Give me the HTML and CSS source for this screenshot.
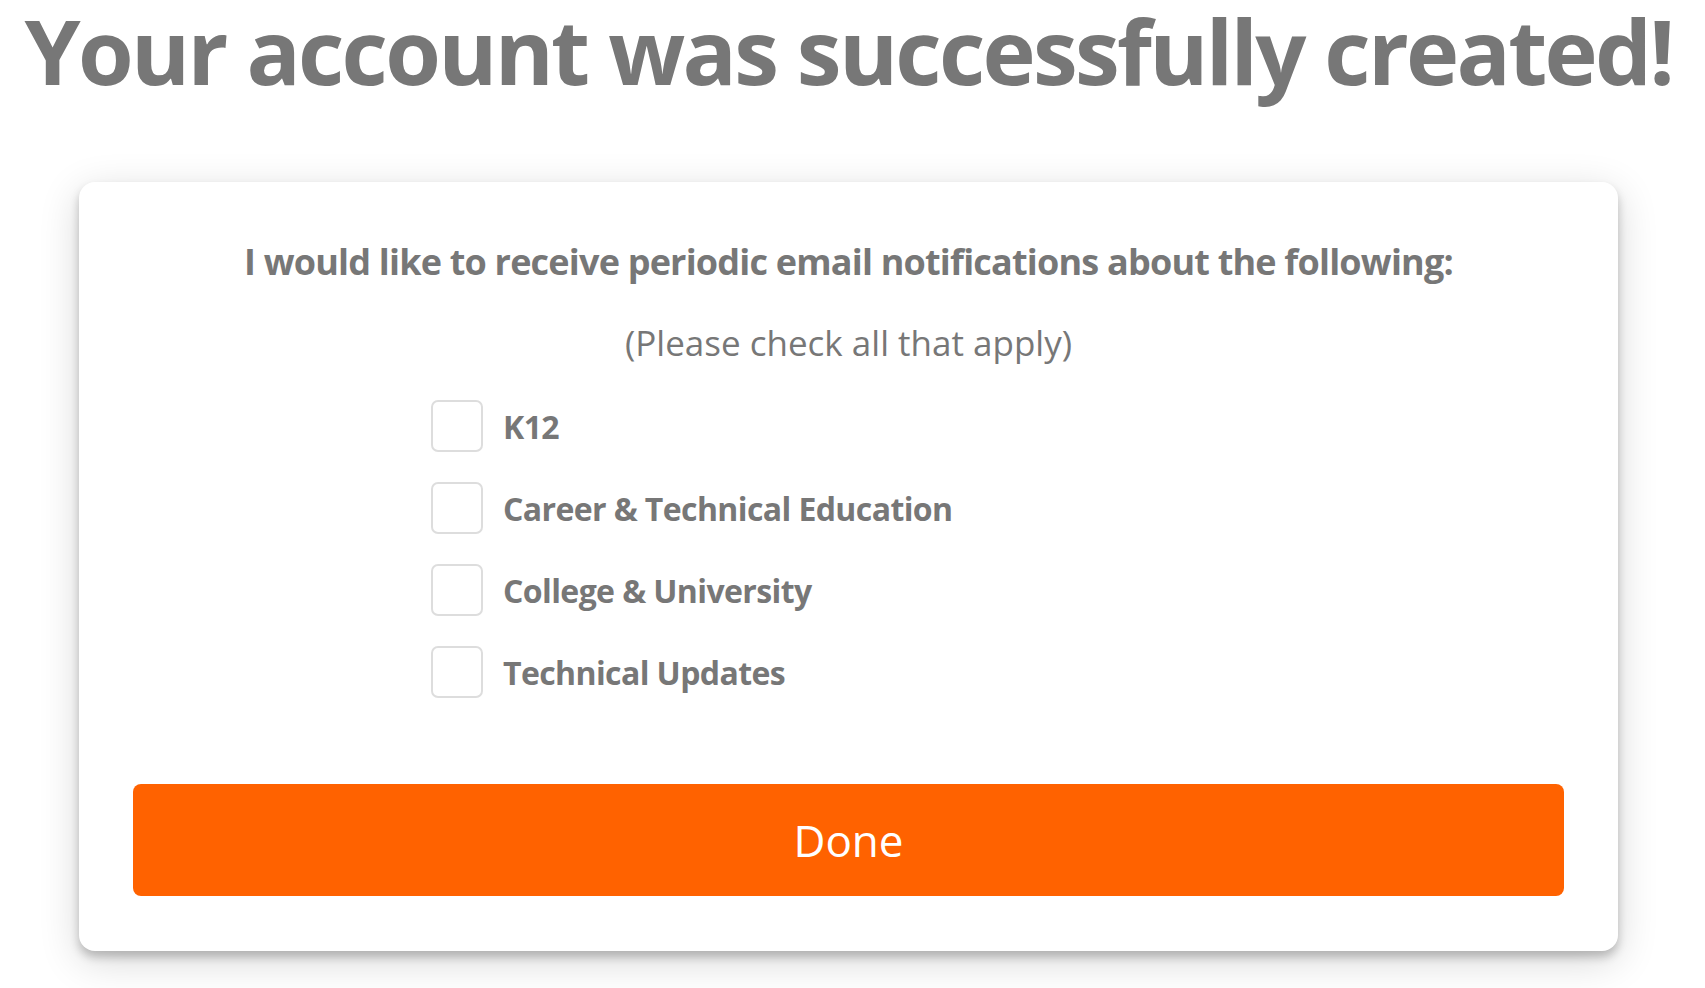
FILE: index.html
```html
<!DOCTYPE html>
<html lang="en">
<head>
    <meta charset="UTF-8">
    <meta name="viewport" content="width=device-width, initial-scale=1.0">
    <title>Account Created</title>
    <link rel="stylesheet" href="styles.css">
</head>
<body>
    <h1 class="title">Your account was successfully created!</h1>

    <div class="card">
        <h2 class="card-heading">I would like to receive periodic email notifications about the following:</h2>
        <p class="card-note">(Please check all that apply)</p>

        <form class="options" id="notifyForm">
            <label class="option"><input type="checkbox" name="k12"> K12</label>
            <label class="option"><input type="checkbox" name="cte"> Career &amp; Technical Education</label>
            <label class="option"><input type="checkbox" name="college"> College &amp; University</label>
            <label class="option"><input type="checkbox" name="tech"> Technical Updates</label>
        </form>

        <button type="button" class="done-btn">Done</button>
    </div>
</body>
</html>
```

FILE: styles.css
```css
/* General Styling */
body {
    margin: 0;
    padding: 0 8px 40px 0;
    font-family: 'Open Sans', sans-serif;
    color: #777;
    background: #fff;
}

.title {
    margin: 0;
    font-size: 90px;
    line-height: 100px;
    font-weight: 700;
    letter-spacing: -2.7px;
    text-align: center;
    white-space: nowrap;
    color: #777;
}

/* Card */
.card {
    box-sizing: border-box;
    width: 1539px;
    margin: 82px auto 0;
    padding: 57px 54px 55px;
    background: #fff;
    border-radius: 16px;
    box-shadow: 0 6px 10px rgba(0, 0, 0, 0.22), 0 10px 40px rgba(0, 0, 0, 0.16);
}

.card-heading {
    margin: 0;
    font-size: 36px;
    line-height: 46px;
    font-weight: 700;
    letter-spacing: -0.8px;
    text-align: center;
}

.card-note {
    margin: 36px 0 0;
    font-size: 35px;
    line-height: 44px;
    text-align: center;
}

/* Options */
.options {
    display: flex;
    flex-direction: column;
    gap: 30px;
    margin-top: 35px;
    padding-left: 298px;
}

.option {
    display: flex;
    align-items: center;
    gap: 20px;
    font-size: 32px;
    font-weight: 700;
    letter-spacing: -0.6px;
    cursor: pointer;
}

.option input {
    appearance: none;
    -webkit-appearance: none;
    width: 52px;
    height: 52px;
    margin: 0;
    border: 2px solid #ddd;
    border-radius: 7px;
    background: #fff;
    cursor: pointer;
}

.option input:checked {
    background: #ff6200;
    border-color: #ff6200;
}

/* Button */
.done-btn {
    display: block;
    width: 100%;
    height: 112px;
    margin-top: 86px;
    border: none;
    border-radius: 8px;
    background: #ff6200;
    color: #fff;
    font-family: inherit;
    font-size: 44px;
    cursor: pointer;
}
```
